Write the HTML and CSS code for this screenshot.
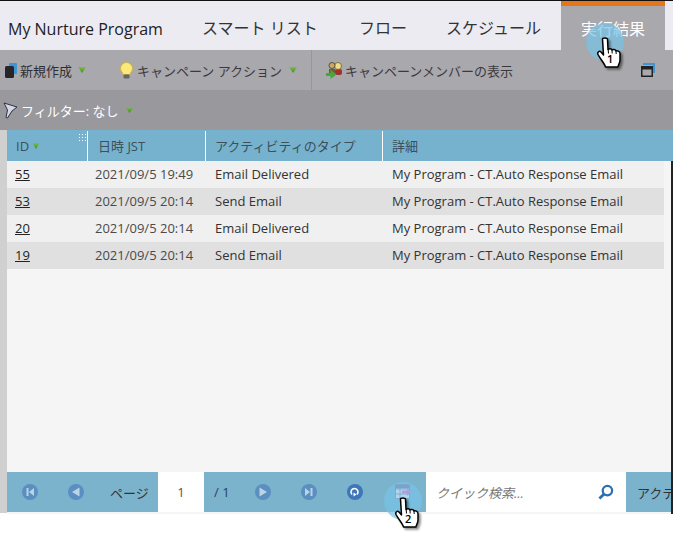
FILE: index.html
```html
<!doctype html>
<html>
<head>
  <meta charset="UTF-8">
  <title>My Nurture Program</title>
  <link rel="stylesheet" href="styles.css">
</head>
<body>
  <div class="page">
    <div class="tabs">
      <div class="prog-name">My Nurture Program</div>
      <a class="tab tab-list">スマート リスト</a>
      <a class="tab tab-flow">フロー</a>
      <a class="tab tab-sched">スケジュール</a>
      <a class="tab tab-active">実行結果</a>
    </div>

    <div class="toolbar">
      <div class="tool tool-new">
        <svg width="12" height="15" viewBox="0 0 12 15"><rect x="4" y="0" width="8" height="11" rx="1" fill="#3f94d2"/><rect x="0" y="3" width="9" height="12" rx="1.500" fill="#26262a"/></svg>
        <span>新規作成</span>
        <i class="arrow"></i>
      </div>
      <div class="tool tool-action">
        <svg width="13" height="17" viewBox="0 0 13 17"><path d="M6.500.5a6 6 0 0 1 6 6c0 2.500-2 3.500-2.500 6H3C2.500 10 .5 9 .5 6.500a6 6 0 0 1 6-6z" fill="#fbe97a" stroke="#d1b33f"/><rect x="3.500" y="12.500" width="6" height="4" rx="1" fill="#666"/></svg>
        <span>キャンペーン アクション</span>
        <i class="arrow"></i>
      </div>
      <div class="tool tool-members">
        <svg width="17" height="18" viewBox="0 0 17 18"><rect x="9" y="8" width="7" height="6" rx="2" fill="#a32f2f"/><circle cx="12" cy="5" r="3.500" fill="#f0dc8a" stroke="#6a5a2a" stroke-width=".8"/><rect x="3" y="8" width="6" height="5" fill="#6f5a34"/><circle cx="6" cy="4.500" r="3" fill="#c9a868" stroke="#4a3a22" stroke-width=".8"/><path d="M0 12h4.500V8.500l6 5-6 4.500v-3H0z" fill="#45a838"/></svg>
        <span>キャンペーンメンバーの表示</span>
      </div>
      <svg class="tool-window" width="14" height="14" viewBox="0 0 14 14"><path d="M2 0h12v10h-2V2H2z" fill="#3f94d2"/><rect x=".75" y="3.750" width="10.500" height="9.500" fill="#a9a8ad" stroke="#222" stroke-width="1.500"/><rect x="1" y="4" width="10" height="2.500" fill="#222"/></svg>
    </div>

    <div class="filterbar">
      <svg width="15" height="17" viewBox="0 0 15 17"><path d="M1 1l13 4-5 4-4.500 7L3 15.500 4.500 8z" fill="#d5d8e2" stroke="#2c3145"/></svg>
      <span>フィルター: なし</span>
      <i class="arrow arrow-filter"></i>
    </div>

    <div class="main">
      <div class="strip"></div>
      <div class="content">
        <div class="grid">
          <div class="row head">
            <div class="cell c-id">ID <i class="arrow arrow-sm"></i><b class="grip"></b></div>
            <div class="cell c-date">日時 JST</div>
            <div class="cell c-type">アクティビティのタイプ</div>
            <div class="cell c-detail">詳細</div>
          </div>
          <div class="row">
            <div class="cell c-id"><a>55</a></div>
            <div class="cell c-date">2021/09/5 19:49</div>
            <div class="cell c-type">Email Delivered</div>
            <div class="cell c-detail">My Program - CT.Auto Response Email</div>
          </div>
          <div class="row alt">
            <div class="cell c-id"><a>53</a></div>
            <div class="cell c-date">2021/09/5 20:14</div>
            <div class="cell c-type">Send Email</div>
            <div class="cell c-detail">My Program - CT.Auto Response Email</div>
          </div>
          <div class="row">
            <div class="cell c-id"><a>20</a></div>
            <div class="cell c-date">2021/09/5 20:14</div>
            <div class="cell c-type">Email Delivered</div>
            <div class="cell c-detail">My Program - CT.Auto Response Email</div>
          </div>
          <div class="row alt">
            <div class="cell c-id"><a>19</a></div>
            <div class="cell c-date">2021/09/5 20:14</div>
            <div class="cell c-type">Send Email</div>
            <div class="cell c-detail">My Program - CT.Auto Response Email</div>
          </div>
        </div>

        <div class="pager">
          <div class="pg-btn pg-first"><svg width="16" height="16" viewBox="0 0 16 16"><circle cx="8" cy="8" r="8" fill="#5b8fc0"/><path d="M4.500 4h2v8h-2zM12 4v8L7 8z" fill="#b9d4e6"/></svg></div>
          <div class="pg-btn pg-prev"><svg width="16" height="16" viewBox="0 0 16 16"><circle cx="8" cy="8" r="8" fill="#5b8fc0"/><path d="M11.500 3.500v9L4 8z" fill="#b9d4e6"/></svg></div>
          <span class="pg-label">ページ</span>
          <div class="pg-input">1</div>
          <span class="pg-total">/ 1</span>
          <div class="pg-btn pg-next"><svg width="16" height="16" viewBox="0 0 16 16"><circle cx="8" cy="8" r="8" fill="#5b8fc0"/><path d="M4.500 3.500v9L12 8z" fill="#b9d4e6"/></svg></div>
          <div class="pg-btn pg-last"><svg width="16" height="16" viewBox="0 0 16 16"><circle cx="8" cy="8" r="8" fill="#5b8fc0"/><path d="M4 4v8l5-4zM9.500 4h2v8h-2z" fill="#b9d4e6"/></svg></div>
          <div class="pg-btn pg-refresh"><svg width="16" height="16" viewBox="0 0 16 16"><circle cx="8" cy="8" r="8" fill="#3f76b8"/><path d="M5 10.500A3.500 3.500 0 1 1 11 8c0 1-.5 1.800-1.200 2.300" fill="none" stroke="#fff" stroke-width="1.600"/><path d="M6.500 8.500v4l3-2z" fill="#fff"/></svg></div>
          <div class="pg-btn pg-export"><svg width="16" height="16" viewBox="0 0 16 16"><path d="M.5.500h14v14H.5z" fill="#b5d6e8"/><path d="M.5.500h14v4H.5z" fill="#7aa3cc"/><path d="M.5.500h14v14H.5zM.5 5h14M.5 10h14M5 .500v14" fill="none" stroke="#7aa3cc" stroke-width=".8"/><path d="M7 6.500h5V4l4 4-4 4V9.500H7z" fill="#a9a0e0"/></svg></div>
          <div class="search">
            <span>クイック検索...</span>
            <svg width="16" height="16" viewBox="0 0 17 17"><circle cx="10" cy="7" r="5" fill="none" stroke="#2f6fb0" stroke-width="2.400"/><path d="M6.500 10.500L1.500 15.500" stroke="#2f6fb0" stroke-width="3"/></svg>
          </div>
          <span class="pg-actions">アクティビティ</span>
        </div>
        <div class="pager-foot"></div>
      </div>
      <div class="edge"></div>
    </div>

    <div class="callout callout-1"></div>
    <div class="hand hand-1">
      <svg width="24" height="31" viewBox="0 0 24 31"><path d="M5.500 2C5.500.5 10 .5 10.500 2L11 12.500C12 11.500 14.500 11.500 15 13 16 12 18.500 12.500 19 14 20 13.500 23 14 23 16.500V23C23 26 21.500 27 21 30H8.500C8 27 4 23 1 17.500 0 15 2.500 13.500 4 15L6.500 18Z" fill="#fff" stroke="#000" stroke-width="1.500" stroke-linejoin="round"/><path d="M11.200 12.500l.3 4M15 13l.2 3.500M19 14l.2 3" stroke="#000"/></svg>
      <span>1</span>
    </div>
    <div class="callout callout-2"></div>
    <div class="hand hand-2">
      <svg width="24" height="31" viewBox="0 0 24 31"><path d="M5.500 2C5.500.5 10 .5 10.500 2L11 12.500C12 11.500 14.500 11.500 15 13 16 12 18.500 12.500 19 14 20 13.500 23 14 23 16.500V23C23 26 21.500 27 21 30H8.500C8 27 4 23 1 17.500 0 15 2.500 13.500 4 15L6.500 18Z" fill="#fff" stroke="#000" stroke-width="1.500" stroke-linejoin="round"/><path d="M11.200 12.500l.3 4M15 13l.2 3.500M19 14l.2 3" stroke="#000"/></svg>
      <span>2</span>
    </div>
  </div>
</body>
</html>
```

FILE: styles.css
```css
*{
  margin:0;
  padding:0;
  box-sizing:border-box;
}
html,body{
  background:#fff;
}
body{
  font-family:"Open Sans","Noto Sans CJK JP",sans-serif;
  color:#333;
  overflow:hidden;
}
.page{
  width:673px;
  height:547px;
  position:relative;
  overflow:hidden;
  border-top:1px solid #111;
}

/* tabs */
.tabs{
  height:49px;
  background:#ecebf2;
  display:flex;
  width:673px;
}
.prog-name{
  width:202px;
  padding:17px 0 0 8px;
  font-size:16px;
  line-height:22px;
  color:#222;
}
.tab{
  font-size:16px;
  line-height:22px;
  padding-top:16px;
  color:#333;
}
.tab-list{width:157px;}
.tab-flow{width:87px;}
.tab-sched{width:115px;}
.tab-active{
  width:104px;
  border-top:5px solid #e5761b;
  background:#a9a8ad;
  color:#fff;
  text-align:center;
  padding-top:12px;
}

/* toolbars */
.toolbar{
  height:40px;
  background:#a9a8ad;
  display:flex;
  align-items:center;
  font-size:13px;
}
.tool{
  display:flex;
  align-items:center;
  height:40px;
  color:#2f2f33;
  white-space:nowrap;
}
.tool-new{
  width:120px;
  padding-left:5px;
  gap:3px;
}
.tool-action{
  width:192px;
  gap:4px;
  border-right:1px solid #97969b;
  color:#3a3a3e;
}
.tool-members{
  padding-left:14px;
  gap:2px;
  color:#3a3a3e;
}
.tool-window{
  margin-left:auto;
  margin-right:18px;
}
.arrow{
  display:inline-block;
  width:8px;
  height:6px;
  margin-left:3px;
  background:linear-gradient(#7cc04a,#3f8a22);
  clip-path:polygon(0 0,100% 0,50% 100%);
}
.arrow-sm{
  width:7px;
  margin-left:0;
  vertical-align:2px;
}
.arrow-filter{
  margin-left:4px;
}
.filterbar{
  height:40px;
  background:#99989d;
  display:flex;
  align-items:center;
  padding-left:3px;
  font-size:13px;
  color:#fff;
  gap:3px;
}

/* grid */
.main{
  display:flex;
  height:384px;
  position:relative;
}
.strip{
  width:7px;
  height:383px;
  background:#d0d0d0;
}
.content{
  width:666px;
  background:#f5f5f5;
  display:flex;
  flex-direction:column;
}
.edge{
  position:absolute;
  right:0;
  top:31px;
  bottom:0;
  width:2px;
  background:#222;
}
.grid{
  height:342px;
}
.row{
  display:flex;
  height:27px;
  width:657px;
  background:#f0f0f0;
  font-size:13px;
  line-height:26px;
}
.row.alt{
  background:#e0e0e0;
}
.row.head{
  height:31px;
  width:666px;
  background:#76b2cd;
  line-height:30px;
}
.cell{
  flex:none;
  white-space:nowrap;
}
.c-id{
  width:80px;
  padding-left:8px;
  position:relative;
}
.c-date{
  width:118px;
  padding-left:8px;
  color:#4a4a4a;
}
.c-type{
  width:177px;
  padding-left:10px;
}
.c-detail{
  padding-left:10px;
}
.head .cell{
  border-left:1px solid #fff;
  color:#3d4f5a;
  height:30px;
  margin-top:1px;
}
.head .c-id{
  border-left:0;
  padding-left:9px;
}
.head .c-date{
  padding-left:10px;
}
.head .c-type{
  padding-left:9px;
}
.head .c-detail{
  padding-left:9px;
}
.c-id a{
  color:#222;
  text-decoration:underline;
}
.grip{
  position:absolute;
  right:1px;
  top:2px;
  width:8px;
  height:8px;
  background-image:radial-gradient(#fff 1px,transparent 1px);
  background-size:3px 3px;
}

/* pager */
.pager{
  height:40px;
  background:#7bb3cd;
  display:flex;
  align-items:center;
  font-size:13px;
  color:#2f3f55;
}
.pager > *{
  flex:none;
}
.pg-btn{
  display:flex;
}
.pg-first{margin-left:15px;}
.pg-prev{margin-left:30px;}
.pg-label{
  width:48px;
  margin-left:26px;
  color:#333;
}
.pg-input{
  width:46px;
  height:40px;
  line-height:40px;
  background:#fff;
  text-align:center;
  color:#555;
}
.pg-total{
  width:40px;
  padding-left:10px;
}
.pg-next{margin-left:11px;}
.pg-last{margin-left:30px;}
.pg-refresh{margin-left:30px;}
.pg-export{
  margin-left:32px;
  position:relative;
  z-index:2;
}
.search{
  width:200px;
  height:40px;
  margin-left:15px;
  background:#fff;
  display:flex;
  align-items:center;
  justify-content:space-between;
  padding:0 12px 0 10px;
  color:#777;
  font-style:italic;
}
.pg-actions{
  margin-left:11px;
  white-space:nowrap;
  color:#333;
}
.pager-foot{
  height:2px;
  background:#f5f5f5;
}

/* click markers */
.callout{
  position:absolute;
  width:38px;
  height:38px;
  border-radius:50%;
  background:rgba(120,195,230,.7);
}
.callout-1{
  left:586px;
  top:22px;
}
.callout-2{
  left:384px;
  top:481px;
}
.hand{
  position:absolute;
  width:24px;
  height:31px;
  z-index:3;
}
.hand svg{
  display:block;
  filter:drop-shadow(2px 2px 1px rgba(0,0,0,.45));
}
.hand span{
  position:absolute;
  left:10px;
  top:15px;
  font-size:11px;
  line-height:14px;
  font-weight:600;
  color:#000;
}
.hand-1{
  left:597px;
  top:36px;
}
.hand-2{
  left:395px;
  top:496px;
}
```
